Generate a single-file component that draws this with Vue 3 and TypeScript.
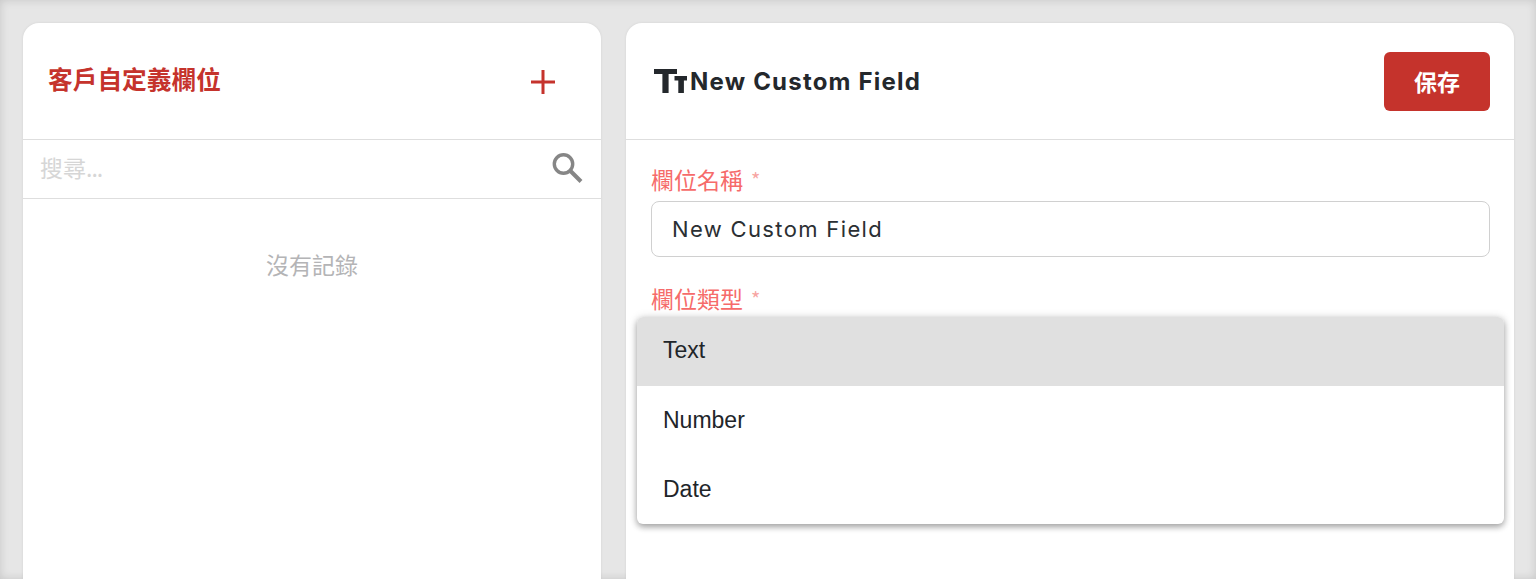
<script setup lang="ts">
const options: string[] = ['Text', 'Number', 'Date']
</script>

<template>
  <div class="page">
    <section class="card list-card">
      <header class="card-head">
        <h2 class="list-title">客戶自定義欄位</h2>
        <button class="add" type="button" aria-label="add">
          <svg width="24" height="24" viewBox="0 0 24 24"><path d="M12 0V24M0 12H24" fill="none" stroke="#c5332c" stroke-width="3" /></svg>
        </button>
      </header>
      <div class="search">
        <span class="placeholder">搜尋<span class="dots">...</span></span>
        <svg class="search-icon" width="31" height="30" viewBox="0 0 31 30">
          <circle cx="11.5" cy="11" r="9.2" fill="none" stroke="#868686" stroke-width="3.4" />
          <path d="M18.5 18L29 28.5" fill="none" stroke="#868686" stroke-width="4" />
        </svg>
      </div>
      <p class="empty">沒有記錄</p>
    </section>

    <section class="card form-card">
      <header class="card-head">
        <div class="form-title">
          <svg width="33" height="24" viewBox="0 0 33 24">
            <path d="M0 0H23V5H14.6V24H8.4V5H0Z M20.5 7H33V11.6H29.9V24H24.3V11.6H20.5Z" fill="#24282c" />
          </svg>
          <h2>New Custom Field</h2>
        </div>
        <button class="save" type="button">保存</button>
      </header>
      <div class="form-body">
        <label class="label">欄位名稱<span class="star">*</span></label>
        <div class="input">New Custom Field</div>
        <label class="label second">欄位類型<span class="star">*</span></label>
        <div class="select-anchor">
          <ul class="menu">
            <li v-for="(o, i) in options" :key="o" class="item" :class="{ active: i === 0 }">{{ o }}</li>
          </ul>
        </div>
      </div>
    </section>
  </div>
</template>

<style>
html, body { margin: 0; height: 100%; overflow: hidden; }
</style>

<style scoped>
.page {
  box-sizing: border-box;
  height: 100vh;
  display: flex;
  gap: 25px;
  padding: 23px 22px 0 23px;
  background: #e6e6e6;
  box-shadow: inset 0 0 10px rgba(0, 0, 0, 0.14);
  font-family: "Noto Sans CJK TC", sans-serif;
  overflow: hidden;
}
.card {
  background: #fff;
  border-radius: 16px 16px 0 0;
  box-shadow: 0 0 3px rgba(0, 0, 0, 0.08);
  display: flex;
  flex-direction: column;
  min-width: 0;
}
.list-card { width: 578px; flex: none; }
.form-card { flex: 1; }
.card-head {
  box-sizing: border-box;
  height: 117px;
  flex: none;
  display: flex;
  align-items: center;
  justify-content: space-between;
  border-bottom: 1px solid #dedede;
}
.list-card .card-head { padding: 0 46px 0 25px; }
.form-card .card-head { padding: 0 24px 0 28px; }
.list-title {
  margin: -6px 0 0;
  font-size: 24.7px;
  line-height: 36px;
  font-weight: 700;
  color: #c5332c;
}
.add {
  display: flex;
  padding: 0;
  border: 0;
  background: none;
  margin-top: 1px;
}
.search {
  box-sizing: border-box;
  height: 59px;
  flex: none;
  display: flex;
  align-items: center;
  justify-content: space-between;
  padding: 0 18px 0 17px;
  border-bottom: 1px solid #dedede;
}
.placeholder {
  font-size: 23px;
  line-height: 34px;
  color: #d6d6d6;
  margin-top: -5px;
}
.dots { letter-spacing: -1px; }
.search-icon { margin-top: -3px; }
.empty {
  margin: 48px 0 0;
  padding-right: 1px;
  text-align: center;
  font-size: 23px;
  line-height: 34px;
  color: #b4b4b6;
  width: 578px;
}
.form-title {
  display: flex;
  align-items: center;
  gap: 3px;
}
.form-title h2 {
  margin: 2px 0 0;
  font-family: Inter, sans-serif;
  font-size: 24px;
  font-weight: 700;
  line-height: 30px;
  color: #24282c;
  letter-spacing: 1.2px;
}
.save {
  width: 106px;
  height: 59px;
  padding: 0;
  border: 0;
  border-radius: 6px;
  background: #c5332c;
  color: #fff;
  font-family: "Noto Sans CJK TC", sans-serif;
  font-size: 23px;
  font-weight: 700;
}
.form-body {
  padding: 21px 24px 0 25px;
  display: flex;
  flex-direction: column;
  position: relative;
}
.label {
  height: 40px;
  font-size: 23px;
  line-height: 37px;
  color: #f66b6a;
  display: block;
}
.label.second { margin-top: 23px; }
.star {
  margin-left: 8px;
  font-size: 20px;
  line-height: 1;
  color: #f7a5a3;
  position: relative;
  top: -1px;
}
.input {
  box-sizing: border-box;
  height: 56px;
  border: 1px solid #d0d0d0;
  border-radius: 8px;
  padding: 0 20px;
  display: flex;
  align-items: center;
  font-family: Inter, sans-serif;
  font-size: 22px;
  color: #2b2f33;
  letter-spacing: 1.35px;
}
.select-anchor {
  position: relative;
  height: 56px;
}
.menu {
  position: absolute;
  top: -3px;
  left: -14px;
  right: -14px;
  margin: 0;
  padding: 0;
  list-style: none;
  background: #fff;
  border-radius: 6px;
  overflow: hidden;
  box-shadow: 0 3px 6px rgba(0, 0, 0, 0.32), 0 0 10px rgba(0, 0, 0, 0.12);
}
.item {
  box-sizing: border-box;
  height: 69px;
  display: flex;
  align-items: center;
  padding: 0 26px;
  font-family: "Liberation Sans", Arial, sans-serif;
  font-size: 23px;
  color: #212529;
}
.item.active { background: #e0e0e0; padding-bottom: 2px; }
</style>
